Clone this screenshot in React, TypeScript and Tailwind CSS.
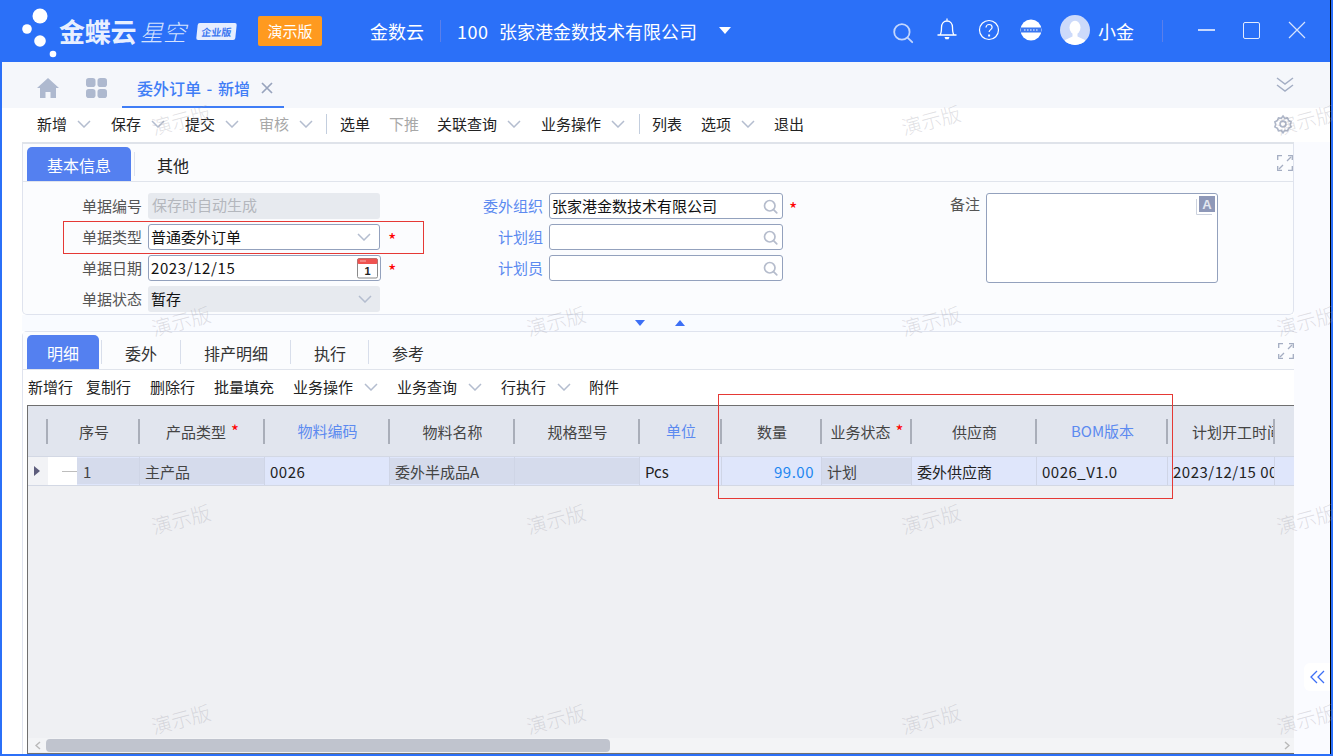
import React from "react";

const FONT = "font-['Noto_Sans_CJK_SC','Noto_Sans',sans-serif]";

function Chev({ className = "" }: { className?: string }) {
  return (
    <svg width="14" height="8" viewBox="0 0 14 8" className={className} fill="none" stroke="#b4bdcf" strokeWidth="1.5">
      <path d="M1 1l6 6 6-6" />
    </svg>
  );
}

function Lens({ size = 16, color = "#b5bccc", width = 1.6 }: { size?: number; color?: string; width?: number }) {
  return (
    <svg width={size} height={size} viewBox="0 0 16 16" fill="none" stroke={color} strokeWidth={width}>
      <circle cx="7.2" cy="7.2" r="5.6" />
      <path d="M11.5 11.5l3.2 3.2" strokeLinecap="round" />
    </svg>
  );
}

function Logo() {
  return (
    <div className="flex items-center">
      <svg width="49" height="58" viewBox="0 0 49 58" className="ml-[20px] mt-[1px] -mr-[10px]" fill="#fff">
        <circle cx="20" cy="13" r="7.5" />
        <circle cx="7" cy="26" r="4.8" />
        <circle cx="20" cy="38" r="5.8" />
        <circle cx="33" cy="51" r="3.3" />
      </svg>
      <span className="text-[26px] leading-[30px] font-bold text-[#e8efff] tracking-[-0.3px]">金蝶云</span>
      <span className="text-[23px] leading-[30px] font-light italic text-[#d5e2fe] ml-[4px]">星空</span>
      <span className="ml-[11px] w-[39px] h-[17px] bg-[#e6eeff] text-[#3d78f0] text-[10px] leading-[17px] font-bold text-center -skew-x-6 rounded-[2px]">
        企业版
      </span>
    </div>
  );
}

function TopBar() {
  return (
    <div className="h-[62px] bg-[#2b70f8] flex items-center text-white shrink-0">
      <div className="w-[258px] shrink-0 -ml-[2px]">
        <Logo />
      </div>
      <div className="w-[64px] h-[30px] bg-[#ff9a1f] rounded-[2px] text-[15px] leading-[30px] text-center shrink-0">演示版</div>
      <span className="ml-[48px] text-[18px] leading-[24px] w-[54px] shrink-0">金数云</span>
      <div className="ml-[16px] w-[1px] h-[22px] bg-[#5b7fea] shrink-0" />
      <div className="ml-[17px] text-[18px] leading-[24px] w-[248px] shrink-0 whitespace-nowrap flex">
        <span className="tracking-[0.5px] w-[42px] shrink-0 -ml-[1px]">100</span>
        <span>张家港金数技术有限公司</span>
      </div>
      <svg width="12" height="7" viewBox="0 0 12 7" fill="#fff" className="ml-[13px] -mt-[2px] shrink-0">
        <path d="M0 0h12L6 7z" />
      </svg>
      <div className="ml-[161px] mt-[4px] shrink-0">
        <Lens size={22} color="#c3d6fd" width={1.3} />
      </div>
      <svg width="22" height="24" viewBox="0 0 22 24" fill="none" stroke="#fff" strokeWidth="1.3" className="ml-[22px] -mt-[4px] shrink-0">
        <path d="M1.5 18h19M4 18c1.5-2 1.5-4 1.5-7.5C5.5 6.500 8 4 11 4s5.500 2.500 5.500 6.500c0 3.500 0 5.500 1.500 7.500" />
        <path d="M11 1.500v2" />
        <path d="M8.500 20h5l-1 2.200h-3z" fill="#fff" stroke="none" />
      </svg>
      <svg width="22" height="22" viewBox="0 0 22 22" fill="none" stroke="#fff" strokeWidth="1.2" className="ml-[20px] -mt-[2px] shrink-0">
        <circle cx="11" cy="11" r="9.500" />
        <path d="M8 8.500c0-1.800 1.400-3 3.100-3s3 1.200 3 2.800c0 2.300-3 2.400-3 4.800" />
        <path d="M10.100 15.500h2v2h-2z" fill="#fff" stroke="none" />
      </svg>
      <svg width="22" height="22" viewBox="0 0 22 22" className="ml-[20px] -mt-[2px] shrink-0">
        <circle cx="11" cy="11" r="10.500" fill="#fff" />
        <rect x="1" y="8.500" width="20" height="5" fill="#3b78f2" />
        <path d="M4 11h14" stroke="#bcd0fb" strokeWidth="1.400" strokeDasharray="1.600 1.400" />
      </svg>
      <svg width="30" height="30" viewBox="0 0 30 30" className="ml-[18px] -mt-[2px] shrink-0">
        <defs>
          <clipPath id="av"><circle cx="15" cy="15" r="15" /></clipPath>
        </defs>
        <circle cx="15" cy="15" r="15" fill="#ccdafa" />
        <g clipPath="url(#av)" fill="#fff">
          <ellipse cx="15" cy="12.500" rx="5.500" ry="6.800" />
          <path d="M12.500 18h5v3.500l7.500 3.500v6H5v-6l7.500-3.500z" />
        </g>
      </svg>
      <span className="ml-[8px] text-[18px] leading-[24px] w-[36px] shrink-0">小金</span>
      <div className="ml-[28px] w-[1px] h-[22px] bg-[#5b7fea] shrink-0" />
      <div className="ml-[35px] w-[17px] h-[2px] bg-[#c7d8fd] -mt-[2px] shrink-0" />
      <div className="ml-[28px] w-[17px] h-[17px] border border-[#e3ebfe] rounded-[2px] -mt-[2px] shrink-0" />
      <svg width="18" height="18" viewBox="0 0 18 18" stroke="#d6e3fd" strokeWidth="1.200" className="ml-[28px] -mt-[2px] shrink-0">
        <path d="M1 1l16 16M17 1L1 17" />
      </svg>
    </div>
  );
}

function TabBar() {
  return (
    <div className="h-[46px] bg-[#f5f7fb] flex items-start shrink-0">
      <svg width="22" height="20" viewBox="0 0 22 20" fill="#aeb9cf" className="ml-[35px] mt-[16px] shrink-0">
        <path d="M11 0L0 10h3v10h5.500v-6h5v6H19V10h3z" />
      </svg>
      <svg width="21" height="20" viewBox="0 0 21 20" fill="#aeb9cf" className="ml-[27px] mt-[16px] shrink-0">
        <rect x="0" y="0" width="9.500" height="9" rx="2.800" />
        <rect x="11.500" y="0" width="9.500" height="9" rx="2.800" />
        <rect x="0" y="11" width="9.500" height="9" rx="2.800" />
        <rect x="11.500" y="11" width="9.500" height="9" rx="2.800" />
      </svg>
      <div className="ml-[15px] w-[162px] h-[46px] border-b-[2px] border-[#3f7df6] flex items-center pl-[15px] pt-[8px] shrink-0">
        <span className="text-[16px] leading-[24px] font-medium text-[#3f7df6] whitespace-nowrap [word-spacing:2px]">委外订单 - 新增</span>
        <svg width="12" height="12" viewBox="0 0 12 12" stroke="#98a4bd" strokeWidth="1.700" className="ml-[11px] shrink-0">
          <path d="M1 1l10 10M11 1L1 11" />
        </svg>
      </div>
      <svg width="18" height="18" viewBox="0 0 18 18" fill="none" stroke="#a4aec4" strokeWidth="1.500" className="ml-[992px] mt-[14px] shrink-0">
        <path d="M1 2l8 6 8-6M1 9l8 6 8-6" />
      </svg>
    </div>
  );
}

type TI = { t: string; w: number; chev?: boolean; off?: boolean; sep?: boolean };
const mainTools: TI[] = [
  { t: "新增", w: 74, chev: true },
  { t: "保存", w: 74, chev: true },
  { t: "提交", w: 74, chev: true },
  { t: "审核", w: 67, chev: true, off: true },
  { t: "", w: 14, sep: true },
  { t: "选单", w: 49 },
  { t: "下推", w: 48, off: true },
  { t: "关联查询", w: 104, chev: true },
  { t: "业务操作", w: 98, chev: true },
  { t: "", w: 13, sep: true },
  { t: "列表", w: 49 },
  { t: "选项", w: 73, chev: true },
  { t: "退出", w: 40 },
];

function MainToolbar() {
  return (
    <div className="h-[34px] bg-white flex items-center pl-[35px] pb-[2px] shrink-0 text-[15px] leading-[22px] text-[#222]">
      {mainTools.map((it, i) =>
        it.sep ? (
          <div key={i} className="shrink-0" style={{ width: it.w }}>
            <div className="w-[1px] h-[20px] bg-[#c3cede]" />
          </div>
        ) : (
          <div key={i} className={"flex items-center shrink-0 " + (it.off ? "text-[#a8a8a8]" : "")} style={{ width: it.w }}>
            <span>{it.t}</span>
            {it.chev && <Chev className="ml-[10px] shrink-0" />}
          </div>
        )
      )}
      <svg width="20" height="20" viewBox="0 0 24 24" fill="none" stroke="#aeb6c8" strokeWidth="2" className="ml-[459px] shrink-0">
        <circle cx="12" cy="12" r="3.500" />
        <path d="M12 2.500l2 2.700 3.400-.5 1.300 3.100 3 1.700-1 3 1 3-3 1.700-1.300 3.100-3.400-.5-2 2.700-2-2.700-3.400.5-1.300-3.100-3-1.700 1-3-1-3 3-1.700 1.300-3.100 3.400.5z" />
      </svg>
    </div>
  );
}

function Expand() {
  return (
    <svg width="16" height="16" viewBox="0 0 16 16" fill="none" stroke="#a4adc2" strokeWidth="1.300">
      <path d="M0.700 5V0.700H5M11 0.700h4.300V5M0.700 11v4.300H5M11 15.300h4.300V11" />
      <path d="M10 6l4-4M6 10l-4 4" />
    </svg>
  );
}

function Star({ ml = 8 }: { ml?: number }) {
  return (
    <span className="text-[#f00] text-[18px] leading-[20px] mt-[4px] shrink-0" style={{ marginLeft: ml }}>
      *
    </span>
  );
}

function Label({ t, blue, w }: { t: string; blue?: boolean; w: number }) {
  return (
    <span className={"text-right mr-[6px] text-[15px] leading-[22px] shrink-0 " + (blue ? "text-[#5c8af0]" : "text-[#555]")} style={{ width: w }}>
      {t}
    </span>
  );
}

function Field({ children, dis, right, w = 232 }: { children?: React.ReactNode; dis?: boolean; right?: React.ReactNode; w?: number }) {
  return (
    <div
      className={
        "h-[26px] rounded-[3px] flex items-center justify-between pr-[3px] text-[15px] leading-[22px] text-[#111] shrink-0 " +
        (dis ? "bg-[#e7eaef] pl-[3px]" : "bg-white border border-[#93a1bd] pl-[2px]")
      }
      style={{ width: w }}
    >
      <span className="whitespace-nowrap">{children}</span>
      {right}
    </div>
  );
}

function Calendar() {
  return (
    <svg width="22" height="21" viewBox="0 0 22 21" className="shrink-0 -mr-[2px]">
      <rect x="0.500" y="0.500" width="20" height="19.500" rx="1.500" fill="#fff" stroke="#8a8a8a" />
      <rect x="0.500" y="0.500" width="20" height="5.500" rx="1.500" fill="#ef5350" />
      <path d="M3 3h6" stroke="#f8b4b0" strokeWidth="1" />
      <text x="10.500" y="17" textAnchor="middle" fontSize="11" fontWeight="700" fill="#222" fontFamily="Liberation Sans">1</text>
    </svg>
  );
}

function FormPanel() {
  const rows = "flex items-center h-[26px]";
  const drop = <Chev className="mr-[5px] shrink-0" />;
  const lens = (
    <span className="mr-[1px] shrink-0 flex">
      <Lens size={15} width={1.8} />
    </span>
  );
  return (
    <div className="h-[171px] border-x border-b border-[#dfe3ee] rounded-b-[5px] bg-[#fbfcfe] shrink-0 flex flex-col">
      <div className="h-[38px] border-b border-[#e0e4ec] flex items-end pl-[4px] shrink-0">
        <div className="w-[104px] h-[34px] bg-[#5480f0] rounded-t-[5px] text-white text-[16px] leading-[36px] text-center">基本信息</div>
        <div className="w-[1px] h-[24px] bg-[#dfe3ee] ml-[3px] mb-[5px]" />
        <span className="ml-[22px] text-[16px] leading-[32px] text-[#222]">其他</span>
        <div className="ml-auto mb-[10px]">
          <Expand />
        </div>
      </div>
      <div className="flex pt-[11px]">
        <div className="flex flex-col gap-[5px] w-[400px] shrink-0">
          <div className={rows}>
            <Label t="单据编号" w={119} />
            <Field dis>
              <span className="text-[#b4b7bd] relative -top-[1px] left-[1px]">保存时自动生成</span>
            </Field>
          </div>
          <div className={rows}>
            <Label t="单据类型" w={119} />
            <Field right={drop}>普通委外订单</Field>
            <Star />
          </div>
          <div className={rows}>
            <Label t="单据日期" w={119} />
            <Field right={<Calendar />} w={233}>
              <span className="tracking-[0.6px]">2023/12/15</span>
            </Field>
            <Star ml={7} />
          </div>
          <div className={rows}>
            <Label t="单据状态" w={119} />
            <Field dis right={drop}>
              暂存
            </Field>
          </div>
        </div>
        <div className="flex flex-col gap-[5px] w-[437px] shrink-0">
          <div className={rows}>
            <Label t="委外组织" blue w={120} />
            <Field w={234} right={lens}>
              张家港金数技术有限公司
            </Field>
            <Star ml={6} />
          </div>
          <div className={rows}>
            <Label t="计划组" blue w={120} />
            <Field w={234} right={lens} />
          </div>
          <div className={rows}>
            <Label t="计划员" blue w={120} />
            <Field w={234} right={lens} />
          </div>
        </div>
        <div className="flex items-start">
          <Label t="备注" w={120} />
          <div className="w-[232px] h-[90px] bg-white border border-[#93a1bd] rounded-[3px] flex justify-end pt-[2px] pr-[2px]">
            <svg width="19" height="19" viewBox="0 0 19 19">
              <path d="M0.500 3v15.500H16" fill="none" stroke="#ccd2de" />
              <rect x="3" y="0" width="16" height="16" fill="#8e98b8" />
              <text x="11" y="13" textAnchor="middle" fontSize="13" fontWeight="700" fill="#e3e7f0" fontFamily="Liberation Sans">A</text>
            </svg>
          </div>
        </div>
      </div>
    </div>
  );
}

const detailTabs = [
  { t: "委外", w: 79 },
  { t: "排产明细", w: 110 },
  { t: "执行", w: 78 },
  { t: "参考", w: 78 },
];
const detailTools: { t: string; w: number; chev?: boolean }[] = [
  { t: "新增行", w: 58 },
  { t: "复制行", w: 64 },
  { t: "删除行", w: 64 },
  { t: "批量填充", w: 79 },
  { t: "业务操作", w: 104, chev: true },
  { t: "业务查询", w: 104, chev: true },
  { t: "行执行", w: 88, chev: true },
  { t: "附件", w: 40 },
];

type Col = { w: number; t: string; blue?: boolean; star?: boolean; val?: string; dark?: boolean; right?: boolean; clip?: boolean; num?: boolean };
const cols: Col[] = [
  { w: 125, t: "产品类型", star: true, val: "主产品", dark: true },
  { w: 125, t: "物料编码", blue: true, val: "0026", num: true },
  { w: 125, t: "物料名称", val: "委外半成品A", dark: true },
  { w: 125, t: "规格型号", val: "", dark: true },
  { w: 82, t: "单位", blue: true, val: "Pcs" },
  { w: 100, t: "数量", val: "99.00", right: true, num: true },
  { w: 90, t: "业务状态", star: true, val: "计划", dark: true },
  { w: 125, t: "供应商", val: "委外供应商" },
  { w: 131, t: "BOM版本", blue: true, val: "0026_V1.0", num: true },
  { w: 107, t: "计划开工时间", val: "2023/12/15 00:00:00", clip: true, num: true },
  { w: 20, t: "", val: "" },
];

function Sep() {
  return <div className="absolute left-[-1px] top-[13px] w-[2px] h-[25px] bg-[#a9aeb9]" />;
}

function Grid() {
  return (
    <div className="flex-1 ml-[4px] border-l border-t border-b border-[#6f6f6f] bg-[#eff0f3] flex flex-col overflow-hidden min-h-0">
      <div className="h-[50px] bg-[#e1e5ee] flex shrink-0 text-[15px] leading-[22px] text-[#444]">
        <div className="w-[19px] shrink-0" />
        <div className="w-[92px] shrink-0 relative flex items-center justify-center pt-[1px] pl-[2px]">
          <Sep />
          序号
        </div>
        {cols.map((c, i) => (
          <div
            key={i}
            className={"shrink-0 relative flex items-center pt-[1px] " + (c.clip ? "justify-start pl-[25px]" : "justify-center pl-[2px]")}
            style={{ width: c.w }}
          >
            <Sep />
            <span
              className={"whitespace-nowrap overflow-hidden " + (c.blue ? "text-[#5c8af0] -mt-[2px] " : "")}
              style={c.clip ? { width: 82 } : undefined}
            >
              {c.t}
            </span>
            {c.star && <span className="text-[#f00] text-[17px] ml-[5px] -mt-[2px]">*</span>}
          </div>
        ))}
      </div>
      <div className="h-[30px] flex shrink-0 text-[15px] leading-[22px] text-[#222] border-b border-[#d3d8e4] border-t border-t-[#d3d8e4]">
        <div className="w-[20px] bg-[#f2f3f6] flex items-center justify-center shrink-0">
          <svg width="6" height="10" viewBox="0 0 6 10" fill="#5d5d7c" className="-ml-[2px]">
            <path d="M0 0l6 5-6 5z" />
          </svg>
        </div>
        <div className="w-[29px] bg-white flex items-center justify-end shrink-0">
          <div className="w-[15px] h-[1px] bg-[#bdbdbd]" />
        </div>
        <div className="w-[62px] bg-[#dfe6fb] py-[1px] shrink-0">
          <div className="h-full bg-[#d5dbec] pl-[6px] pt-[2px] text-[#444] flex items-center">1</div>
        </div>
        {cols.map((c, i) => (
          <div key={i} className="bg-[#dfe6fb] border-l border-[#cfd5e6] shrink-0 overflow-hidden py-[1px]" style={{ width: c.w }}>
            <div
              className={
                "h-full flex items-center whitespace-nowrap pt-[2px] overflow-hidden " +
                (c.dark ? "bg-[#d5dbec] text-[#444] " : "") +
                (c.right ? "justify-end pr-[7px] text-[#1e86f0] " : "") +
                (c.num ? "tracking-[0.5px] " : "") +
                "pl-[5px]"
              }
            >
              {c.val}
            </div>
          </div>
        ))}
      </div>
      <div className="flex-1" />
      <div className="h-[14px] bg-[#f3f4f6] flex items-center shrink-0 mb-[1px]">
        <svg width="6" height="9" viewBox="0 0 6 9" fill="none" stroke="#b9b9b9" strokeWidth="1.500" className="ml-[7px] shrink-0">
          <path d="M5 1L1 4.500 5 8" />
        </svg>
        <div className="ml-[5px] w-[564px] h-[13px] bg-[#c0c4ce] rounded-[4px] shrink-0" />
        <svg width="6" height="9" viewBox="0 0 6 9" fill="none" stroke="#b9b9b9" strokeWidth="1.500" className="ml-[674px] shrink-0">
          <path d="M1 1l4 3.500L1 8" />
        </svg>
      </div>
    </div>
  );
}

function DetailPanel() {
  return (
    <div className="flex-1 min-h-0 border-t border-l border-[#dfe3ee] rounded-tl-[5px] bg-white flex flex-col">
      <div className="h-[38px] bg-[#fbfcfe] border-b border-[#e0e4ec] flex items-end pl-[4px] shrink-0">
        <div className="w-[72px] h-[34px] bg-[#5480f0] rounded-t-[5px] text-white text-[16px] leading-[36px] text-center shrink-0">明细</div>
        <div className="w-[2px] shrink-0" />
        {detailTabs.map((d, i) => (
          <div key={i} className="flex items-end shrink-0" style={{ width: d.w }}>
            <div className="w-[1px] h-[24px] bg-[#d8deeb] mb-[5px] shrink-0" />
            <span className="ml-[23px] text-[16px] leading-[32px] text-[#333]">{d.t}</span>
          </div>
        ))}
        <div className="ml-auto mb-[10px]">
          <Expand />
        </div>
      </div>
      <div className="h-[35px] flex items-center pl-[5px] pb-[2px] text-[15px] leading-[22px] text-[#222] shrink-0">
        {detailTools.map((it, i) => (
          <div key={i} className="flex items-center shrink-0" style={{ width: it.w }}>
            <span>{it.t}</span>
            {it.chev && <Chev className="ml-[11px] shrink-0" />}
          </div>
        ))}
      </div>
      <Grid />
    </div>
  );
}

const marks = [
  [151, 108], [901, 108], [1276, 108],
  [151, 309], [526, 309], [901, 309], [1276, 309],
  [151, 507], [526, 507], [901, 507], [1276, 507],
  [151, 707], [526, 707], [901, 707], [1276, 707],
];

export default function App() {
  return (
    <div className={"relative w-[1333px] h-[756px] overflow-hidden bg-white " + FONT}>
      <div className="w-[1333px] h-[756px] border-l-[2px] border-r-[2px] border-b-[2px] border-[#2b70f8] flex flex-col bg-white">
        <div className="flex-1 min-h-0 flex flex-col border-r border-black">
          <TopBar />
          <TabBar />
          <MainToolbar />
          <div className="flex-1 min-h-0 flex">
            <div className="w-[20px] shrink-0" />
            <div className="w-[1272px] shrink-0 flex flex-col min-h-0">
              <div className="h-[2px] bg-[#dfe3ea] shrink-0" />
              <FormPanel />
              <div className="h-[16px] bg-[#f9fbff] flex items-center justify-center gap-[30px] shrink-0 pl-[4px]">
                <svg width="10" height="6" viewBox="0 0 10 6" fill="#3d6ff5">
                  <path d="M0 0h10L5 6z" />
                </svg>
                <svg width="10" height="6" viewBox="0 0 10 6" fill="#3d6ff5">
                  <path d="M0 6h10L5 0z" />
                </svg>
              </div>
              <DetailPanel />
            </div>
            <div className="flex-1 bg-[#fafbff]" />
          </div>
        </div>
      </div>
      <div className="absolute left-[63px] top-[221px] w-[361px] h-[33px] border border-[#e53935] pointer-events-none" />
      <div className="absolute left-[718px] top-[394px] w-[455px] h-[105px] border border-[#e53935] pointer-events-none" />
      <div className="absolute left-[1304px] top-[663px] w-[26px] h-[28px] bg-white rounded-l-[6px] flex items-center justify-center">
        <svg width="15" height="14" viewBox="0 0 15 14" fill="none" stroke="#3d6ff5" strokeWidth="1.300">
          <path d="M7 1L1 7l6 6M14 1L8 7l6 6" />
        </svg>
      </div>
      {marks.map(([x, y], i) => (
        <div
          key={i}
          className="absolute text-[20px] leading-[24px] font-light text-[#9a9aa6]/30 -rotate-[15deg] pointer-events-none whitespace-nowrap"
          style={{ left: x, top: y }}
        >
          演示版
        </div>
      ))}
    </div>
  );
}
